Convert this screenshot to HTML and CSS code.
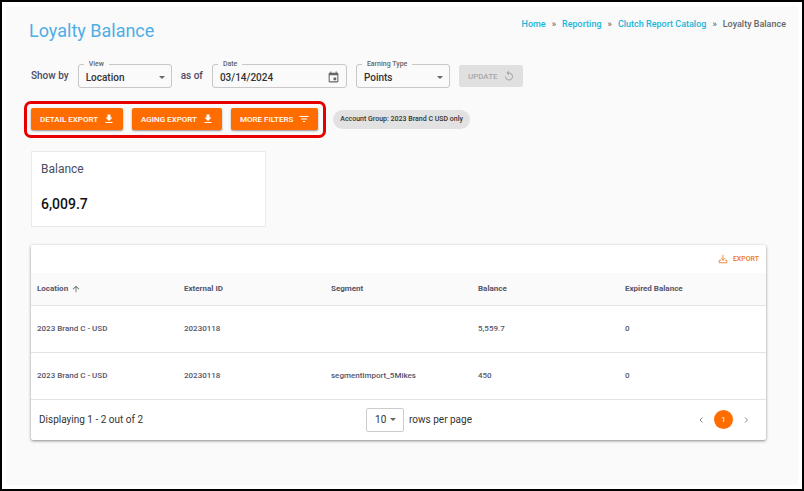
FILE: index.html
```
<!DOCTYPE html>
<html lang="en">
<head>
    <meta charset="UTF-8" />
    <meta name="viewport" content="width=device-width, initial-scale=1.0" />
    <title>Loyalty Balance</title>
    <link rel="stylesheet" href="styles.css">
</head>
<body>
<main class="page">
    <header class="page-header">
        <h1>Loyalty Balance</h1>
        <nav class="breadcrumbs" aria-label="Breadcrumb">
            <a href="#">Home</a>
            <span>»</span>
            <a href="#">Reporting</a>
            <span>»</span>
            <a href="#">Clutch Report Catalog</a>
            <span>»</span>
            <span>Loyalty Balance</span>
        </nav>
    </header>

    <form class="filters">
        <span class="filter-text">Show by</span>
        <fieldset class="field">
            <legend><label for="view">View</label></legend>
            <div class="select">
                <select id="view">
                    <option>Location</option>
                </select>
                <svg class="caret" viewBox="0 0 6 3"><path d="M0 0h6L3 3z" /></svg>
            </div>
        </fieldset>
        <span class="filter-text">as of</span>
        <fieldset class="field date-field">
            <legend><label for="date">Date</label></legend>
            <div class="date">
                <input id="date" type="text" value="03/14/2024" />
                <button type="button" aria-label="Choose date">
                    <svg viewBox="0 0 24 24"><path d="M19 3h-1V1h-2v2H8V1H6v2H5c-1.1 0-2 .9-2 2v14c0 1.1.9 2 2 2h14c1.1 0 2-.9 2-2V5c0-1.100-.9-2-2-2zm0 16H5V8h14v11zM12 12h5v5h-5z" /></svg>
                </button>
            </div>
        </fieldset>
        <fieldset class="field">
            <legend><label for="earning">Earning Type</label></legend>
            <div class="select">
                <select id="earning">
                    <option>Points</option>
                </select>
                <svg class="caret" viewBox="0 0 6 3"><path d="M0 0h6L3 3z" /></svg>
            </div>
        </fieldset>
        <button class="btn update" type="submit" disabled>
            Update
            <svg viewBox="0 0 24 24"><path d="M12 5V1L7 6l5 5V7c3.310 0 6 2.690 6 6s-2.690 6-6 6-6-2.690-6-6H4c0 4.420 3.580 8 8 8s8-3.580 8-8-3.580-8-8-8z" /></svg>
        </button>
    </form>

    <div class="actions">
        <div class="highlight">
            <button class="btn" type="button">
                Detail Export
                <svg viewBox="0 0 24 24"><path d="M19 9h-4V3H9v6H5l7 7 7-7zM5 18v2h14v-2H5z" /></svg>
            </button>
            <button class="btn" type="button">
                Aging Export
                <svg viewBox="0 0 24 24"><path d="M19 9h-4V3H9v6H5l7 7 7-7zM5 18v2h14v-2H5z" /></svg>
            </button>
            <button class="btn" type="button">
                More Filters
                <svg viewBox="0 0 24 24"><path d="M10 18h4v-2h-4v2zM3 6v2h18V6H3zm3 7h12v-2H6v2z" /></svg>
            </button>
        </div>
        <span class="chip">Account Group: 2023 Brand C USD only</span>
    </div>

    <section class="card">
        <h2>Balance</h2>
        <p>6,009.7</p>
    </section>

    <section class="panel">
        <div class="toolbar">
            <button class="export" type="button">
                <svg viewBox="0 0 24 24"><path d="M12 2v13M7 10l5 5 5-5M7 15H3v6h18v-6h-4" /></svg>
                Export
            </button>
        </div>
        <table>
            <thead>
                <tr>
                    <th>Location <svg class="sort" viewBox="0 0 24 24"><path d="M4 12l1.410 1.410L11 7.830V20h2V7.830l5.580 5.590L20 12l-8-8-8 8z" /></svg></th>
                    <th>External ID</th>
                    <th>Segment</th>
                    <th>Balance</th>
                    <th>Expired Balance</th>
                </tr>
            </thead>
            <tbody>
                <tr>
                    <td>2023 Brand C - USD</td>
                    <td>20230118</td>
                    <td></td>
                    <td>5,559.7</td>
                    <td>0</td>
                </tr>
                <tr>
                    <td>2023 Brand C - USD</td>
                    <td>20230118</td>
                    <td>segmentImport_5Mikes</td>
                    <td>450</td>
                    <td>0</td>
                </tr>
            </tbody>
        </table>
        <footer class="table-footer">
            <span>Displaying 1 - 2 out of 2</span>
            <div class="per-page">
                <div class="select">
                    <select id="rows">
                        <option>10</option>
                    </select>
                    <svg class="caret" viewBox="0 0 6 3"><path d="M0 0h6L3 3z" /></svg>
                </div>
                <label for="rows">rows per page</label>
            </div>
            <nav class="pager" aria-label="Pages">
                <button type="button" aria-label="Previous page">
                    <svg viewBox="0 0 24 24"><path d="M15 7l-5 5 5 5" /></svg>
                </button>
                <button class="current" type="button">1</button>
                <button type="button" aria-label="Next page">
                    <svg viewBox="0 0 24 24"><path d="M10 7l5 5-5 5" /></svg>
                </button>
            </nav>
        </footer>
    </section>
</main>
</body>
</html>
```
FILE: styles.css
```
* {
    box-sizing: border-box;
}

body {
    margin: 0;
    min-height: 100vh;
    display: flex;
    padding: 4px;
    border: 2px solid #000;
    background: #fff;
    font-family: Roboto, sans-serif;
    font-size: 10px;
    color: #333;
}

h1, h2, p, fieldset {
    margin: 0;
}

button, input, select {
    font: inherit;
    color: inherit;
    margin: 0;
    padding: 0;
    border: none;
    background: none;
}

.page {
    flex: 1;
    padding: 10px 32px 24px 25px;
    background: #fafafa;
}

/* Header */
.page-header {
    display: flex;
    justify-content: space-between;
    align-items: flex-start;
    height: 43px;
    margin-right: -20px;
}

h1 {
    margin-left: -2px;
    font-size: 18px;
    line-height: 30px;
    font-weight: 400;
    color: #4eaee5;
}

.breadcrumbs {
    display: flex;
    gap: 6px;
    font-size: 9px;
    line-height: 16px;
    font-weight: 500;
    color: #666;
}

.breadcrumbs a {
    color: #19b5d8;
    text-decoration: none;
}

/* Filters */
.filters {
    display: flex;
    align-items: flex-end;
    gap: 9px;
}

.filter-text {
    line-height: 24px;
    font-weight: 500;
    color: #4b4b66;
}

.field {
    width: 94px;
    min-width: 0;
    height: 29px;
    padding: 0 6px 0 7px;
    border: 1px solid #c8c8c8;
    border-radius: 3px;
    font-weight: 500;
    color: #333;
}

.date-field {
    width: 135px;
}

.field legend {
    margin-left: -2px;
    padding: 0 5px;
    font-size: 7px;
    line-height: 10px;
    color: #666;
}

.select {
    display: grid;
    align-items: center;
}

.select select,
.select .caret {
    grid-area: 1 / 1;
}

.select select {
    appearance: none;
    width: 100%;
    height: 16px;
}

.caret {
    width: 6px;
    height: 3px;
    justify-self: end;
    fill: #666;
    pointer-events: none;
}

.date {
    display: flex;
    align-items: center;
}

.date input {
    flex: 1;
    min-width: 0;
    height: 16px;
}

.date button {
    display: flex;
}

.date svg {
    width: 13px;
    height: 13px;
    fill: #666;
}

/* Buttons */
.btn {
    display: flex;
    align-items: center;
    gap: 5px;
    height: 22px;
    padding: 0 8px 0 9px;
    border-radius: 2px;
    background: #ff6d00;
    box-shadow: 0 1px 2px rgba(0, 0, 0, 0.4);
    font-size: 8px;
    font-weight: 500;
    text-transform: uppercase;
    color: #fff;
    cursor: pointer;
}

.btn svg {
    width: 12px;
    height: 12px;
    fill: currentColor;
}

.update {
    margin-bottom: 1px;
    background: #e0e0e0;
    box-shadow: none;
    color: #a8a8a8;
    cursor: default;
}

.actions {
    display: flex;
    align-items: center;
    gap: 7px;
    margin: 13px 0 13px -7px;
}

.highlight {
    display: flex;
    gap: 9px;
    padding: 4px 5px 5px 4px;
    border: 3px solid #e60000;
    border-radius: 7px;
}

.chip {
    padding: 0 7px;
    border-radius: 10px;
    background: #e2e2e2;
    font-size: 7px;
    line-height: 19px;
    font-weight: 500;
    color: #333;
}

/* Balance card */
.card {
    width: 235px;
    height: 76px;
    padding: 9px;
    border: 1px solid #eaeaea;
    background: #fff;
}

.card h2 {
    font-size: 12px;
    line-height: 16px;
    font-weight: 400;
    color: #4b4b66;
}

.card p {
    margin-top: 18px;
    font-size: 14px;
    line-height: 18px;
    font-weight: 500;
    color: #111;
}

/* Table */
.panel {
    margin-top: 18px;
    border-radius: 2px;
    background: #fff;
    box-shadow: 0 1px 3px rgba(0, 0, 0, 0.45);
}

.toolbar {
    display: flex;
    justify-content: flex-end;
    height: 28px;
    padding: 0 7px;
}

.export {
    display: flex;
    align-items: center;
    gap: 5px;
    font-size: 7px;
    font-weight: 500;
    text-transform: uppercase;
    color: #ee7623;
    cursor: pointer;
}

.export svg {
    width: 10px;
    height: 10px;
    fill: none;
    stroke: currentColor;
    stroke-width: 2;
}

table {
    width: 100%;
    table-layout: fixed;
    border-collapse: collapse;
    font-size: 8px;
    color: #55556a;
}

th, td {
    height: 47px;
    padding: 0 6px;
    border-bottom: 1px solid #e4e4e4;
    text-align: left;
    font-weight: 500;
}

th {
    height: 32px;
    background: #fafafa;
    font-weight: 700;
}

.sort {
    width: 10px;
    height: 10px;
    margin-left: 1px;
    vertical-align: middle;
    fill: #666;
}

.table-footer {
    display: flex;
    justify-content: space-between;
    align-items: center;
    height: 40px;
    padding: 0 14px 0 8px;
    color: #333;
}

.per-page {
    display: flex;
    align-items: center;
    gap: 5px;
}

.per-page .select {
    width: 38px;
    padding: 0 7px 0 8px;
    border: 1px solid #ccc;
    border-radius: 2px;
}

.per-page select {
    height: 22px;
}

.pager {
    display: flex;
    align-items: center;
    gap: 7px;
}

.pager button {
    display: flex;
    cursor: pointer;
}

.pager svg {
    width: 12px;
    height: 12px;
    fill: none;
    stroke: #888;
    stroke-width: 2;
}

.pager .current {
    justify-content: center;
    align-items: center;
    width: 19px;
    height: 19px;
    border-radius: 50%;
    background: #ff6d00;
    font-size: 8px;
    color: #fff;
}
```
